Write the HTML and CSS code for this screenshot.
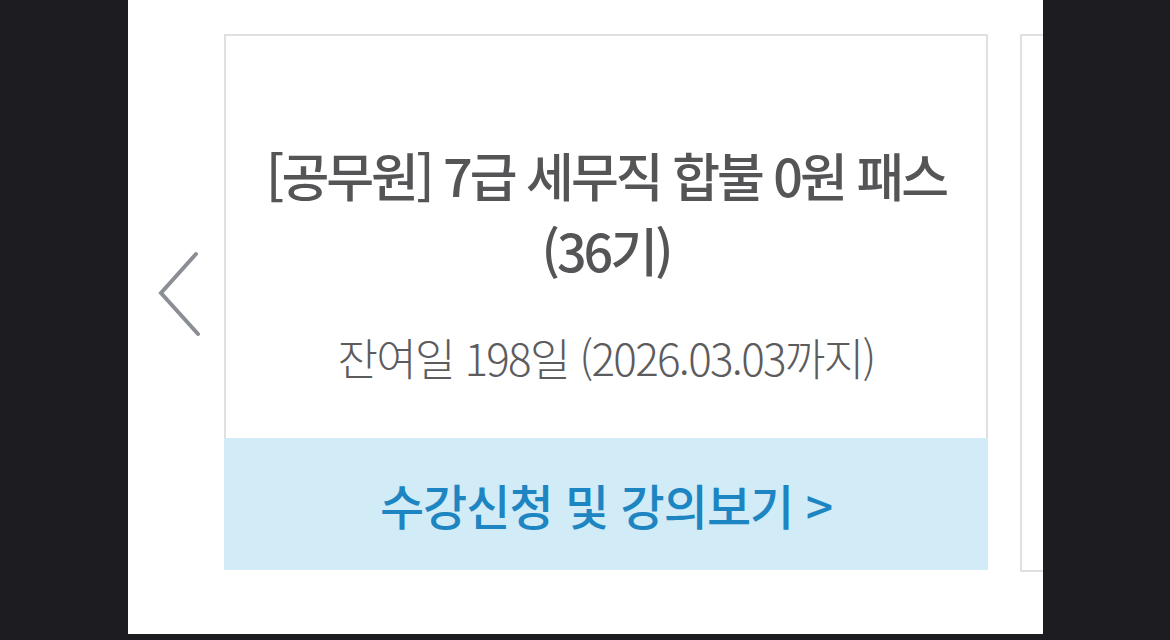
FILE: index.html
```html
<!DOCTYPE html>
<html lang="ko">
<head>
<meta charset="utf-8">
<link rel="stylesheet" href="styles.css">
</head>
<body>
<div class="stage">
  <div class="prev">
    <svg width="44" height="86" viewBox="0 0 44 86" aria-hidden="true">
      <polyline points="38,3 3,42 40,83" fill="none" stroke="#8b8e94" stroke-width="4" stroke-linecap="round" stroke-linejoin="miter"/>
    </svg>
  </div>
  <div class="card">
    <div class="card-body">
      <div class="title">[공무원] 7급 세무직 합불 0원 패스<br>(36기)</div>
      <div class="remain">잔여일 198일 (2026.03.03까지)</div>
    </div>
    <div class="card-band">수강신청 및 강의보기 &gt;</div>
  </div>
  <div class="card next">
    <div class="card-body"></div>
  </div>
</div>
</body>
</html>
```
FILE: styles.css
```css
html, body {
  margin: 0;
  padding: 0;
  background: #1d1c21;
}
body {
  width: 1170px;
  height: 640px;
  overflow: hidden;
  font-family: "Noto Sans CJK KR", "Noto Sans", sans-serif;
}
.stage {
  margin-left: 128px;
  width: 915px;
  height: 634px;
  background: #ffffff;
  display: flex;
  align-items: flex-start;
  padding-top: 34px;
  box-sizing: border-box;
  overflow: hidden;
}
.prev {
  flex: 0 0 96px;
  height: 520px;
  display: flex;
  align-items: center;
  padding-left: 30px;
  box-sizing: border-box;
}
.card {
  flex: 0 0 764px;
  display: flex;
  flex-direction: column;
}
.card-body {
  height: 404px;
  border: 2px solid #e0e0e2;
  border-bottom: none;
  box-sizing: border-box;
  text-align: center;
  padding-top: 101px;
}
.title {
  font-size: 52px;
  font-weight: 500;
  line-height: 75px;
  color: #555557;
  letter-spacing: -3px;
}
.remain {
  margin-top: 44px;
  font-size: 44px;
  font-weight: 300;
  line-height: 52px;
  color: #5c5c5e;
  letter-spacing: -1.7px;
}
.card-band {
  height: 132px;
  background: #d1ebf7;
  color: #1d85c1;
  font-size: 48px;
  font-weight: 500;
  letter-spacing: -1px;
  display: flex;
  align-items: center;
  justify-content: center;
}
.next {
  flex: 0 0 200px;
  margin-left: 32px;
}
.next .card-body {
  height: 538px;
  border-bottom: 2px solid #e0e0e2;
}
```
